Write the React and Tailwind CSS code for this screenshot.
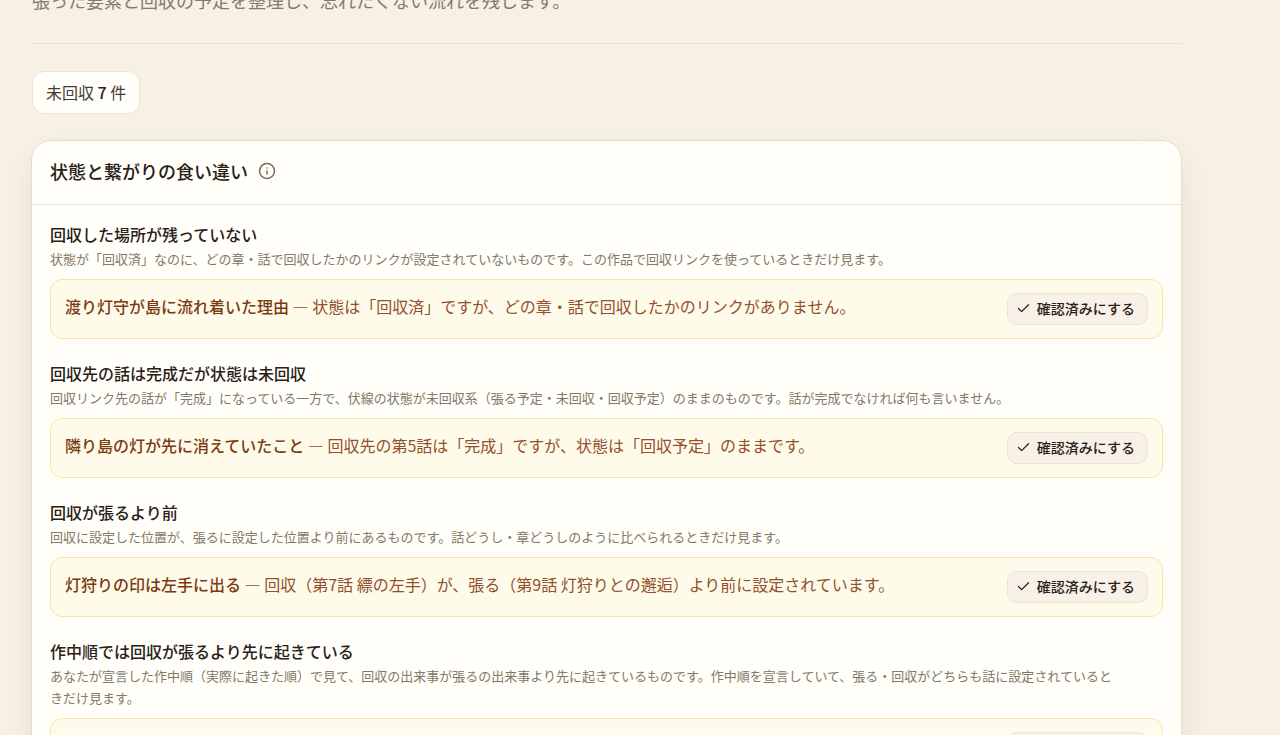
import React from 'react';
import { Check, Info } from 'lucide-react';

const groups = [
  {
    id: 'missing-place',
    title: '回収した場所が残っていない',
    description:
      '状態が「回収済」なのに、どの章・話で回収したかのリンクが設定されていないものです。この作品で回収リンクを使っているときだけ見ます。',
    item: '渡り灯守が島に流れ着いた理由',
    message: '状態は「回収済」ですが、どの章・話で回収したかのリンクがありません。',
  },
  {
    id: 'done-but-open',
    title: '回収先の話は完成だが状態は未回収',
    description:
      '回収リンク先の話が「完成」になっている一方で、伏線の状態が未回収系（張る予定・未回収・回収予定）のままのものです。話が完成でなければ何も言いません。',
    item: '隣り島の灯が先に消えていたこと',
    message: '回収先の第5話は「完成」ですが、状態は「回収予定」のままです。',
  },
  {
    id: 'before-setup',
    title: '回収が張るより前',
    description:
      '回収に設定した位置が、張るに設定した位置より前にあるものです。話どうし・章どうしのように比べられるときだけ見ます。',
    item: '灯狩りの印は左手に出る',
    message: '回収（第7話 縹の左手）が、張る（第9話 灯狩りとの邂逅）より前に設定されています。',
  },
  {
    id: 'story-order',
    title: '作中順では回収が張るより先に起きている',
    description:
      'あなたが宣言した作中順（実際に起きた順）で見て、回収の出来事が張るの出来事より先に起きているものです。作中順を宣言していて、張る・回収がどちらも話に設定されているときだけ見ます。',
  },
];

const IssueGroup = ({ group }) => (
  <section>
    <h3 className="text-base leading-[22px] font-medium text-[#292018]">{group.title}</h3>
    <p className="mt-[3px] pr-10 text-[13px] leading-[22px] text-[#827967]">{group.description}</p>
    <div className="mt-[9px] flex items-start justify-between gap-4 rounded-xl border border-[#f9e79f] bg-[#fffbea] px-3.5 py-[13px]">
      <p className="text-base leading-[26px] text-[#92502c]">
        {group.item && (
          <>
            <strong className="font-medium text-[#7c3a10]">{group.item}</strong>
            {' — '}
            {group.message}
          </>
        )}
      </p>
      <button
        type="button"
        className="flex h-8 shrink-0 items-center gap-1.5 rounded-[10px] border border-[#ebe4d3] bg-[#f8f1e7] px-2 pr-3 pb-0.5 text-sm font-medium text-[#292018]"
      >
        <Check size={15} strokeWidth={2} aria-hidden="true" />
        確認済みにする
      </button>
    </div>
  </section>
);

export default function App() {
  return (
    <div
      lang="ja"
      className="h-screen overflow-hidden bg-[#f7f0e5] px-8 font-['Noto_Sans_CJK_JP',sans-serif] text-[#292018]"
    >
      <main className="max-w-[1150px]">
        {/* Page intro */}
        <header className="-mt-[14px] border-b border-[#ebe2ca] pb-[29px]">
          <p className="text-lg leading-7 text-[#857b68]">
            張った要素と回収の予定を整理し、忘れたくない流れを残します。
          </p>
        </header>

        <p className="mt-[27px] flex h-[43px] w-fit items-center rounded-xl border border-[#ece4cd] bg-[#fffef9] px-[13px] pb-0.5 text-base whitespace-pre text-[#453b32]">
          未回収 <strong className="font-medium text-[#292018]">7</strong> 件
        </p>

        {/* Mismatch list */}
        <div className="mt-[26px] -ml-px rounded-[20px] border border-[#e5ddd0] bg-[#fffef9] shadow-[0_16px_32px_-4px_rgba(120,80,40,0.12)]">
          <div className="flex h-16 items-center gap-2.5 border-b border-[#e9e6d3] px-[18px] pb-[3px]">
            <h2 className="text-lg leading-7 font-medium">状態と繋がりの食い違い</h2>
            <button type="button" aria-label="説明を表示" className="text-[#7a6c56]">
              <Info size={18} strokeWidth={2} aria-hidden="true" />
            </button>
          </div>
          <div className="flex flex-col gap-[23px] p-[18px]">
            {groups.map((group) => (
              <IssueGroup key={group.id} group={group} />
            ))}
          </div>
        </div>
      </main>
    </div>
  );
}
